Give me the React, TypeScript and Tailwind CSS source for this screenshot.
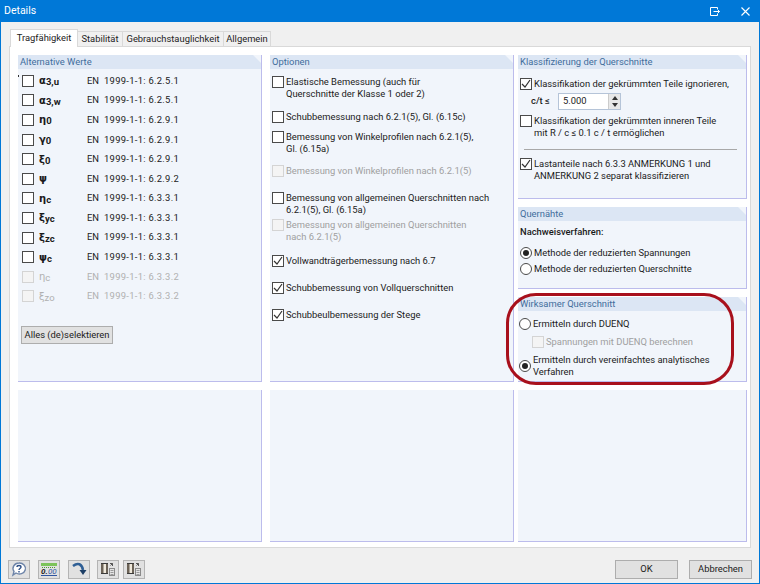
import type { ReactNode } from "react";

function Box({ checked, disabled }: { checked?: boolean; disabled?: boolean }) {
  return (
    <span className={`w-3 h-3 shrink-0 border flex items-center justify-center ${disabled ? "border-[#d4d4d4] bg-[#f4f4f4]" : "border-[#4a4a4a] bg-white"}`}>
      {checked && (
        <svg width="10" height="10" viewBox="0 0 10 10">
          <path d="M1 5l3 3 5-7" fill="none" stroke="#333" strokeWidth="1.2" />
        </svg>
      )}
    </span>
  );
}

function Radio({ checked }: { checked?: boolean }) {
  return (
    <span className="w-3 h-3 shrink-0 rounded-full border border-[#4a4a4a] bg-white flex items-center justify-center">
      {checked && <span className="w-1.5 h-1.5 rounded-full bg-[#222]" />}
    </span>
  );
}

function Group({ title, className, children }: { title?: string; className: string; children?: ReactNode }) {
  return (
    <div className={`flex flex-col bg-[#f1f5fb] border-r border-b border-[#bcbcec] ${className}`}>
      {title && (
        <div className="h-[14px] shrink-0 bg-[#dce6f4] text-[#3f6d9c] pl-[2px] leading-[14px] [clip-path:polygon(0_0,calc(100%-8px)_0,100%_8px,100%_100%,0_100%)]">
          {title}
        </div>
      )}
      {children}
    </div>
  );
}

function Option({ children, checked, disabled, className = "" }: { children: ReactNode; checked?: boolean; disabled?: boolean; className?: string }) {
  return (
    <div className={`flex gap-[2px] leading-[12px] whitespace-nowrap ${disabled ? "text-[#a0a0a0]" : "text-[#1a1a1a]"} ${className}`}>
      <Box checked={checked} disabled={disabled} />
      <div>{children}</div>
    </div>
  );
}

const CODES: { sym: string; sub: string; code: string; off?: boolean }[] = [
  { sym: "α", sub: "3,u", code: "1999-1-1: 6.2.5.1" },
  { sym: "α", sub: "3,w", code: "1999-1-1: 6.2.5.1" },
  { sym: "η", sub: "0", code: "1999-1-1: 6.2.9.1" },
  { sym: "γ", sub: "0", code: "1999-1-1: 6.2.9.1" },
  { sym: "ξ", sub: "0", code: "1999-1-1: 6.2.9.1" },
  { sym: "ψ", sub: "", code: "1999-1-1: 6.2.9.2" },
  { sym: "η", sub: "c", code: "1999-1-1: 6.3.3.1" },
  { sym: "ξ", sub: "yc", code: "1999-1-1: 6.3.3.1" },
  { sym: "ξ", sub: "zc", code: "1999-1-1: 6.3.3.1" },
  { sym: "ψ", sub: "c", code: "1999-1-1: 6.3.3.1" },
  { sym: "η", sub: "c", code: "1999-1-1: 6.3.3.2", off: true },
  { sym: "ξ", sub: "zo", code: "1999-1-1: 6.3.3.2", off: true },
];

function ToolButton({ children }: { children: ReactNode }) {
  return (
    <div className="w-[22px] h-[19px] bg-[#e1e1e1] border border-[#b4b4b4] flex items-center justify-center">{children}</div>
  );
}

function CopyIcon() {
  return (
    <svg width="16" height="15" viewBox="0 0 16 15">
      <path d="M1 2h7v9H1z" fill="#6b6256" />
      <path d="M3.500 2h2.500v9H3.500z" fill="#efe9dc" />
      <path d="M1 1.500h7M1 11.500h7" stroke="#3a3a3a" />
      <rect x="9.500" y="6.500" width="5" height="7" fill="#e4e4e4" stroke="#8a8a8a" />
      <path d="M10.500 8.500h3M10.500 10.500h3M10.500 12.500h3" stroke="#999" />
      <path d="M10 1.500h2.500V4M12.500 1.500l-2 2" fill="none" stroke="#555" />
    </svg>
  );
}

export default function App() {
  return (
    <div className="w-[760px] h-[584px] flex flex-col bg-[#f0f0f0] border-x border-b border-[#0078d7] text-[9.4px] text-[#1a1a1a] overflow-hidden relative" style={{ fontFamily: 'Roboto, "Liberation Sans", sans-serif' }}>
      {/* title bar */}
      <div className="h-[22px] shrink-0 -mx-px bg-[#0078d7] flex items-center text-white pl-[4px]">
        <span className="text-[10.5px]">Details</span>
        <div className="ml-auto flex items-center gap-[21px] pr-[10px]">
          <svg width="10" height="9" viewBox="0 0 10 9">
            <path d="M7.500 2V.5H.5v8h7V7M3.500 4.500h6M7.500 2.500l2 2-2 2" fill="none" stroke="#fff" />
          </svg>
          <svg width="9" height="9" viewBox="0 0 9 9">
            <path d="M.5.500l8 8M8.500.500l-8 8" stroke="#fff" strokeWidth="1.1" />
          </svg>
        </div>
      </div>

      {/* tabs */}
      <div className="flex items-end h-[24px] shrink-0 pl-[9px] text-[#222]">
        <div className="w-[68px] h-[18px] bg-white border border-b-0 border-[#d9d9d9] flex items-center justify-center relative top-px z-10">Tragfähigkeit</div>
        <div className="w-[45px] h-[15px] bg-[#f0f0f0] border border-b-0 border-l-0 border-[#d9d9d9] flex items-center justify-center">Stabilität</div>
        <div className="w-[101px] h-[15px] bg-[#f0f0f0] border border-b-0 border-l-0 border-[#d9d9d9] flex items-center justify-center">Gebrauchstauglichkeit</div>
        <div className="w-[47px] h-[15px] bg-[#f0f0f0] border border-b-0 border-l-0 border-[#d9d9d9] flex items-center justify-center">Allgemein</div>
      </div>

      {/* tab panel */}
      <div className="mx-[8px] h-[502px] shrink-0 bg-white border border-[#d9d9d9] pt-[8px] pl-[8px] flex gap-[8px]">
        <div className="w-[244px] flex flex-col gap-[8px]">
          <Group title="Alternative Werte" className="h-[327px] relative">
            <span className="absolute left-0 top-[20px] w-px h-[2px] bg-[#333]" />
            <div className="pt-[2px] pl-[4px] flex flex-col">
              {CODES.map((row, i) => (
                <div key={i} className={`h-[19.6px] flex items-center ${row.off ? "text-[#b0b0b0]" : ""}`}>
                  <Box disabled={row.off} />
                  <span className={`w-[53px] pl-[5px] whitespace-nowrap ${row.off ? "" : "font-bold"}`}>
                    <span style={{ fontFamily: '"DejaVu Sans", sans-serif' }} className="text-[10px]">{row.sym}</span>
                    <span className="text-[9.500px] relative top-px">{row.sub}</span>
                  </span>
                  <span className="w-[17px]">EN</span>
                  <span className="tracking-[0.3px] whitespace-nowrap">{row.code}</span>
                </div>
              ))}
            </div>
            <button className="ml-[3px] mt-[20px] w-[92px] h-[18px] bg-[#e1e1e1] border border-[#adadad] text-[#1a1a1a] whitespace-nowrap">Alles (de)selektieren</button>
          </Group>
          <Group className="h-[152px]" />
        </div>

        <div className="w-[244px] flex flex-col gap-[8px]">
          <Group title="Optionen" className="h-[327px]">
            <div className="pl-[2px] pt-[7px] flex flex-col">
              <Option>Elastische Bemessung (auch für<br />Querschnitte der Klasse 1 oder 2)</Option>
              <Option className="mt-[11px]">Schubbemessung nach 6.2.1(5), Gl. (6.15c)</Option>
              <Option className="mt-[8px]">Bemessung von Winkelprofilen nach 6.2.1(5),<br />Gl. (6.15a)</Option>
              <Option disabled className="mt-[10px]">Bemessung von Winkelprofilen nach 6.2.1(5)</Option>
              <Option className="mt-[15px]">Bemessung von allgemeinen Querschnitten nach<br />6.2.1(5), Gl. (6.15a)</Option>
              <Option disabled className="mt-[3px]">Bemessung von allgemeinen Querschnitten<br />nach 6.2.1(5)</Option>
              <Option checked className="mt-[12px]">Vollwandträgerbemessung nach 6.7</Option>
              <Option checked className="mt-[15px]">Schubbemessung von Vollquerschnitten</Option>
              <Option checked className="mt-[15px]">Schubbeulbemessung der Stege</Option>
            </div>
          </Group>
          <Group className="h-[152px]" />
        </div>

        <div className="w-[229px] flex flex-col gap-[8px] -ml-[4px]">
          <Group title="Klassifizierung der Querschnitte" className="h-[144px]">
            <div className="pl-[2px] pt-[9px] pr-[9px] flex flex-col">
              <Option checked>Klassifikation der gekrümmten Teile ignorieren,</Option>
              <div className="flex items-center h-[18px] mt-[2px] pl-[11px]">
                <span className="w-[27px] font-medium">c/t ≤</span>
                <div className="w-[63px] h-[17px] bg-white border border-[#b5c4d8] flex items-center pl-[4px]">
                  <span>5.000</span>
                  <div className="ml-auto w-[12px] h-full bg-[#e8e8e8] border-l border-[#ccc] flex flex-col items-center justify-center gap-[3px]">
                    <svg width="6" height="4" viewBox="0 0 6 4"><path d="M3 0l3 4H0z" fill="#333" /></svg>
                    <svg width="6" height="4" viewBox="0 0 6 4"><path d="M0 0h6L3 4z" fill="#333" /></svg>
                  </div>
                </div>
              </div>
              <Option className="mt-[5px]">Klassifikation der gekrümmten inneren Teile<br />mit R / c ≤ 0.1 c / t ermöglichen</Option>
              <div className="h-px bg-[#a8a8a8] ml-[4px] mt-[10px]" />
              <Option checked className="mt-[8px]">Lastanteile nach 6.3.3 ANMERKUNG 1 und<br />ANMERKUNG 2 separat klassifizieren</Option>
            </div>
          </Group>
          <Group title="Quernähte" className="h-[82px]">
            <div className="pl-[2px] pt-[5px] flex flex-col leading-[12px] whitespace-nowrap">
              <div className="font-medium">Nachweisverfahren:</div>
              <div className="flex gap-[2px] mt-[9px]"><Radio checked />Methode der reduzierten Spannungen</div>
              <div className="flex gap-[2px] mt-[4px]"><Radio />Methode der reduzierten Querschnitte</div>
            </div>
          </Group>
          <Group title="Wirksamer Querschnitt" className="h-[85px]">
            <div className="pl-[1px] pt-[7px] flex flex-col leading-[12px] whitespace-nowrap">
              <div className="flex gap-[2px]"><Radio />Ermitteln durch DUENQ</div>
              <Option disabled className="mt-[6px] pl-[13px]">Spannungen mit DUENQ berechnen</Option>
              <div className="flex items-center gap-[2px] mt-[6px]"><Radio checked /><div>Ermitteln durch vereinfachtes analytisches<br />Verfahren</div></div>
            </div>
          </Group>
          <Group className="h-[152px]" />
        </div>
      </div>

      {/* footer */}
      <div className="flex items-center pl-[7px] pr-[7px] mt-[12px]">
        <div className="flex gap-[8px]">
          <ToolButton>
            <svg width="16" height="15" viewBox="0 0 16 15">
              <path d="M8 1a6 5.500 0 1 1-3 10l-3 2 1-3.500A6 5.500 0 0 1 8 1z" fill="#fff" stroke="#6d84a8" strokeWidth="1.400" />
              <path d="M6 5c0-2 4-2 4 0 0 1.500-2 1.500-2 3M8 9v1.500" fill="none" stroke="#2d4f86" strokeWidth="1.400" />
            </svg>
          </ToolButton>
          <ToolButton>
            <svg width="18" height="15" viewBox="0 0 18 15">
              <rect x="1" y="1" width="16" height="3" fill="#7cc35a" />
              <path d="M2 5.500h14" stroke="#4e9a33" strokeDasharray="1 1" />
              <text x="1" y="12" fontSize="8" fontStyle="italic" fontWeight="700" fill="#222">0.</text>
              <text x="8" y="12" fontSize="8" fontStyle="italic" fill="#2f55a0">00</text>
              <path d="M1 13.500h16" stroke="#2f55a0" />
            </svg>
          </ToolButton>
          <ToolButton>
            <svg width="16" height="15" viewBox="0 0 16 15">
              <path d="M2 4c5-4 9-2 10 4" fill="none" stroke="#2f5f95" strokeWidth="2.500" />
              <path d="M8.500 8h7L12 13z" fill="#1d3f66" />
            </svg>
          </ToolButton>
          <div className="-ml-px"><ToolButton><CopyIcon /></ToolButton></div>
          <div className="-ml-[4px]"><ToolButton><CopyIcon /></ToolButton></div>
        </div>
        <div className="ml-auto flex gap-[11px]">
          <button className="w-[63px] h-[19px] bg-[#e1e1e1] border border-[#adadad]">OK</button>
          <button className="w-[63px] h-[19px] bg-[#e1e1e1] border border-[#adadad]">Abbrechen</button>
        </div>
      </div>

      {/* red annotation */}
      <div className="absolute left-[505px] top-[293px] w-[228px] h-[92px] rounded-[30px] border-[3px] border-[#a8101c]" />
    </div>
  );
}
